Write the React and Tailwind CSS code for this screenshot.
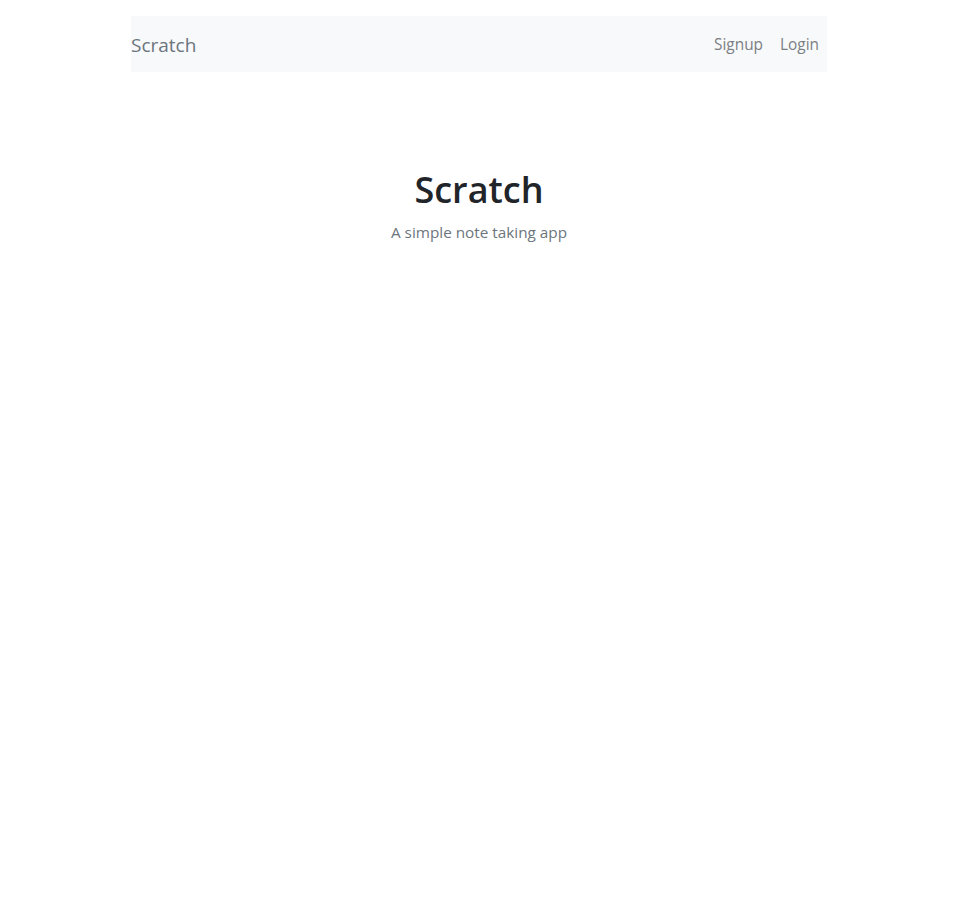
export default function App() {
  return (
    <div className="min-h-[923px] bg-white" style={{ fontFamily: '"Open Sans", "Noto Sans", sans-serif' }}>
      <div className="w-[696px] mx-auto pt-4">
        <nav className="h-14 bg-[#f8f9fa] flex items-center justify-between pr-2">
          <span className="text-[19px] text-[#6c757d] leading-none mt-[2px]">Scratch</span>
          <div className="flex gap-[17px] text-[15.4px] text-[#7b7f84] mt-[2px]">
            <span>Signup</span>
            <span>Login</span>
          </div>
        </nav>
        <div className="pt-[96px] text-center">
          <h1 className="text-[36px] font-semibold text-[#212529] leading-[1.2]">Scratch</h1>
          <p className="text-[15.3px] text-[#6c757d] mt-[10px]">A simple note taking app</p>
        </div>
      </div>
    </div>
  );
}
